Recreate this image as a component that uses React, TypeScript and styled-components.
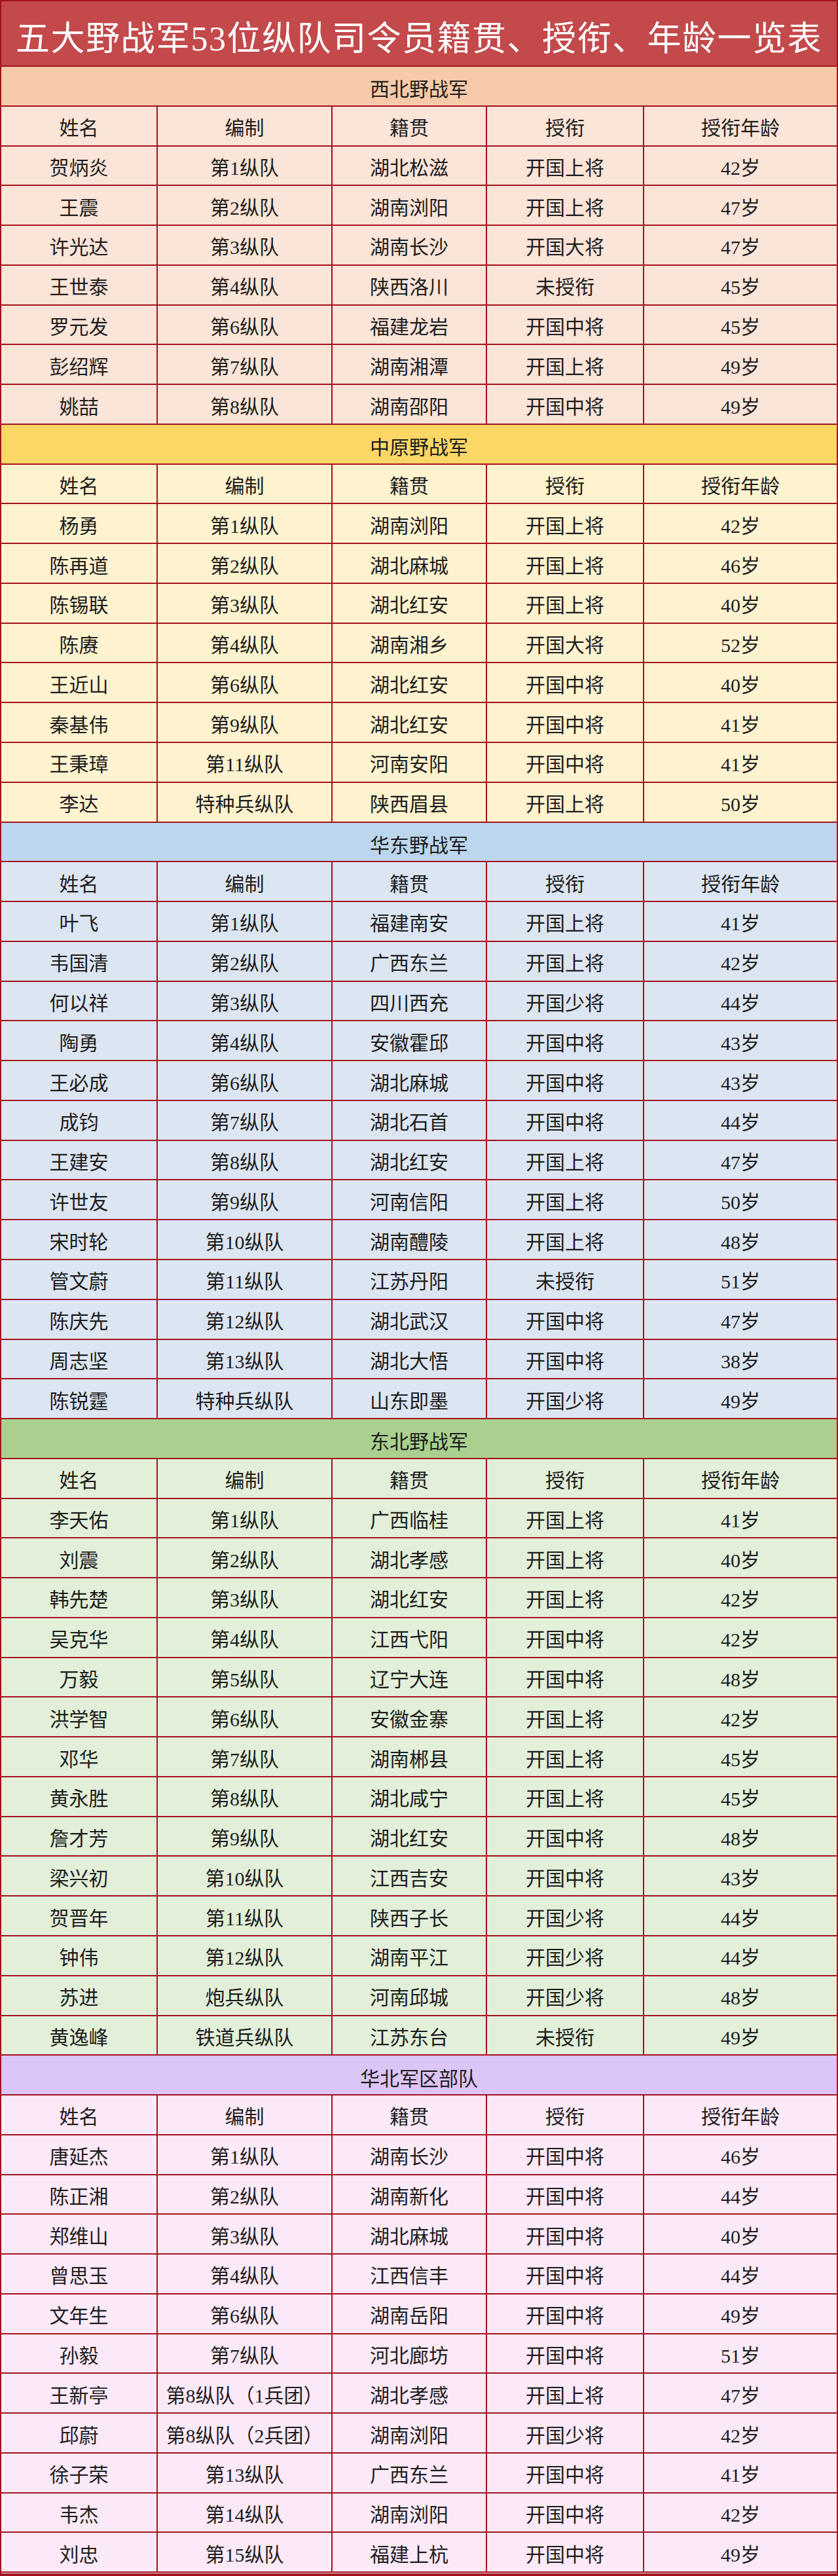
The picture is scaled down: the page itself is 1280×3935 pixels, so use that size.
import styled, { createGlobalStyle } from "styled-components";

type Officer = [string, string, string, string, string];

type Army = {
  name: string;
  band: string;
  row: string;
  officers: Officer[];
};

const LINE = "#a3121f";
const ROW_HEIGHT = 60.78;

const armies: Army[] = [
  {
    name: "西北野战军",
    band: "#f7caa9",
    row: "#fbe4d8",
    officers: [
      ["贺炳炎", "第1纵队", "湖北松滋", "开国上将", "42岁"],
      ["王震", "第2纵队", "湖南浏阳", "开国上将", "47岁"],
      ["许光达", "第3纵队", "湖南长沙", "开国大将", "47岁"],
      ["王世泰", "第4纵队", "陕西洛川", "未授衔", "45岁"],
      ["罗元发", "第6纵队", "福建龙岩", "开国中将", "45岁"],
      ["彭绍辉", "第7纵队", "湖南湘潭", "开国上将", "49岁"],
      ["姚喆", "第8纵队", "湖南邵阳", "开国中将", "49岁"],
    ],
  },
  {
    name: "中原野战军",
    band: "#fdd765",
    row: "#fff2cf",
    officers: [
      ["杨勇", "第1纵队", "湖南浏阳", "开国上将", "42岁"],
      ["陈再道", "第2纵队", "湖北麻城", "开国上将", "46岁"],
      ["陈锡联", "第3纵队", "湖北红安", "开国上将", "40岁"],
      ["陈赓", "第4纵队", "湖南湘乡", "开国大将", "52岁"],
      ["王近山", "第6纵队", "湖北红安", "开国中将", "40岁"],
      ["秦基伟", "第9纵队", "湖北红安", "开国中将", "41岁"],
      ["王秉璋", "第11纵队", "河南安阳", "开国中将", "41岁"],
      ["李达", "特种兵纵队", "陕西眉县", "开国上将", "50岁"],
    ],
  },
  {
    name: "华东野战军",
    band: "#bcd6ed",
    row: "#dce5f2",
    officers: [
      ["叶飞", "第1纵队", "福建南安", "开国上将", "41岁"],
      ["韦国清", "第2纵队", "广西东兰", "开国上将", "42岁"],
      ["何以祥", "第3纵队", "四川西充", "开国少将", "44岁"],
      ["陶勇", "第4纵队", "安徽霍邱", "开国中将", "43岁"],
      ["王必成", "第6纵队", "湖北麻城", "开国中将", "43岁"],
      ["成钧", "第7纵队", "湖北石首", "开国中将", "44岁"],
      ["王建安", "第8纵队", "湖北红安", "开国上将", "47岁"],
      ["许世友", "第9纵队", "河南信阳", "开国上将", "50岁"],
      ["宋时轮", "第10纵队", "湖南醴陵", "开国上将", "48岁"],
      ["管文蔚", "第11纵队", "江苏丹阳", "未授衔", "51岁"],
      ["陈庆先", "第12纵队", "湖北武汉", "开国中将", "47岁"],
      ["周志坚", "第13纵队", "湖北大悟", "开国中将", "38岁"],
      ["陈锐霆", "特种兵纵队", "山东即墨", "开国少将", "49岁"],
    ],
  },
  {
    name: "东北野战军",
    band: "#a9d08e",
    row: "#e2efd9",
    officers: [
      ["李天佑", "第1纵队", "广西临桂", "开国上将", "41岁"],
      ["刘震", "第2纵队", "湖北孝感", "开国上将", "40岁"],
      ["韩先楚", "第3纵队", "湖北红安", "开国上将", "42岁"],
      ["吴克华", "第4纵队", "江西弋阳", "开国中将", "42岁"],
      ["万毅", "第5纵队", "辽宁大连", "开国中将", "48岁"],
      ["洪学智", "第6纵队", "安徽金寨", "开国上将", "42岁"],
      ["邓华", "第7纵队", "湖南郴县", "开国上将", "45岁"],
      ["黄永胜", "第8纵队", "湖北咸宁", "开国上将", "45岁"],
      ["詹才芳", "第9纵队", "湖北红安", "开国中将", "48岁"],
      ["梁兴初", "第10纵队", "江西吉安", "开国中将", "43岁"],
      ["贺晋年", "第11纵队", "陕西子长", "开国少将", "44岁"],
      ["钟伟", "第12纵队", "湖南平江", "开国少将", "44岁"],
      ["苏进", "炮兵纵队", "河南邱城", "开国少将", "48岁"],
      ["黄逸峰", "铁道兵纵队", "江苏东台", "未授衔", "49岁"],
    ],
  },
  {
    name: "华北军区部队",
    band: "#dcc5f7",
    row: "#fce9f8",
    officers: [
      ["唐延杰", "第1纵队", "湖南长沙", "开国中将", "46岁"],
      ["陈正湘", "第2纵队", "湖南新化", "开国中将", "44岁"],
      ["郑维山", "第3纵队", "湖北麻城", "开国中将", "40岁"],
      ["曾思玉", "第4纵队", "江西信丰", "开国中将", "44岁"],
      ["文年生", "第6纵队", "湖南岳阳", "开国中将", "49岁"],
      ["孙毅", "第7纵队", "河北廊坊", "开国中将", "51岁"],
      ["王新亭", "第8纵队（1兵团）", "湖北孝感", "开国上将", "47岁"],
      ["邱蔚", "第8纵队（2兵团）", "湖南浏阳", "开国少将", "42岁"],
      ["徐子荣", "第13纵队", "广西东兰", "开国中将", "41岁"],
      ["韦杰", "第14纵队", "湖南浏阳", "开国中将", "42岁"],
      ["刘忠", "第15纵队", "福建上杭", "开国中将", "49岁"],
    ],
  },
];

const headings: Officer = ["姓名", "编制", "籍贯", "授衔", "授衔年龄"];

const GlobalStyle = createGlobalStyle`
  * {
    box-sizing: border-box;
  }
  body {
    margin: 0;
    background: #ffffff;
    font-family: "Liberation Serif", "Noto Sans CJK SC", serif;
  }
`;

const App = () => (
  <>
    <GlobalStyle />
    <Sheet>
      <Title>五大野战军53位纵队司令员籍贯、授衔、年龄一览表</Title>
      {armies.map((army) => (
        <section key={army.name}>
          <Band $bg={army.band}>{army.name}</Band>
          {[headings, ...army.officers].map((officer, i) => (
            <Row key={army.name + i} $bg={army.row}>
              {officer.map((value, j) => (
                <Cell key={j}>{value}</Cell>
              ))}
            </Row>
          ))}
        </section>
      ))}
    </Sheet>
  </>
);

const Sheet = styled.div`
  width: 1280px;
  min-height: 3935px;
  border-left: 2px solid ${LINE};
  border-right: 2px solid ${LINE};
  border-top: 2px solid ${LINE};
  border-bottom: 4px solid ${LINE};
  background: #fce9f8;
  color: #1c1c1c;
`;

const Title = styled.div`
  height: 100px;
  display: flex;
  align-items: center;
  justify-content: center;
  padding-top: 6px;
  background: #c3494b;
  border-bottom: 2px solid ${LINE};
  color: #ffffff;
  font-size: 52px;
  letter-spacing: 1.5px;
  white-space: nowrap;
`;

const Band = styled.div<{ $bg: string }>`
  height: ${ROW_HEIGHT}px;
  display: flex;
  align-items: center;
  justify-content: center;
  padding-top: 6px;
  background: ${(p) => p.$bg};
  border-bottom: 2px solid ${LINE};
  font-size: 30px;
`;

const Row = styled.div<{ $bg: string }>`
  height: ${ROW_HEIGHT}px;
  display: grid;
  grid-template-columns: 239px 267px 236px 240px 1fr;
  background: ${(p) => p.$bg};
  border-bottom: 2px solid ${LINE};
`;

const Cell = styled.div`
  display: flex;
  align-items: center;
  justify-content: center;
  padding-top: 2px;
  font-size: 30px;
  white-space: nowrap;
  border-right: 2px solid ${LINE};

  &:last-child {
    border-right: none;
  }
`;

export default App;
